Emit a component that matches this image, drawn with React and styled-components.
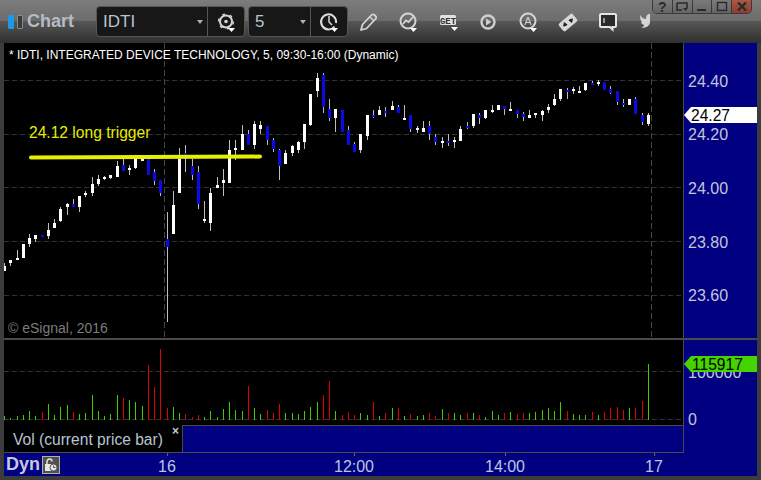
import React from 'react'
import styled, { createGlobalStyle } from 'styled-components'

const GlobalStyle = createGlobalStyle`
  html, body {
    margin: 0;
    background: #3c3c3c;
  }
`

// wick top, wick bottom, body top, body bottom, 1 = blue (down) bar
const candles = [
  [263,271,266,271,0],[260,266,260,263,0],[250,260,258,260,0],[244,258,244,258,0],[234,247,238,244,0],
  [235,242,235,239,0],[235,237,235,237,1],[223,239,230,236,0],[219,228,223,228,0],[207,222,209,221,0],
  [203,215,204,207,0],[199,207,204,207,1],[196,212,196,207,0],[191,197,193,195,0],[177,196,184,193,0],
  [175,186,179,184,0],[176,180,177,179,0],[175,179,175,178,0],[161,177,166,177,0],[159,171,165,171,1],
  [165,175,168,170,0],[155,169,155,168,0],[156,161,158,161,0],[155,175,159,175,1],[169,185,172,181,1],
  [180,196,180,193,1],[212,322,239,247,1],[191,234,205,234,0],[148,193,159,193,0],[145,172,153,156,1],
  [159,180,166,175,1],[166,209,172,204,1],[201,223,219,221,0],[188,231,193,223,0],[177,188,185,188,0],
  [169,196,180,183,0],[140,183,150,183,0],[140,160,148,150,0],[125,150,134,150,0],[130,145,134,145,1],
  [121,149,124,145,0],[121,134,125,129,0],[126,145,126,140,1],[138,152,140,149,1],[149,180,150,166,1],
  [150,164,153,164,0],[145,156,146,153,0],[141,153,142,150,0],[124,149,124,142,0],[94,126,94,125,0],
  [73,97,78,91,0],[73,113,75,107,1],[99,121,109,118,1],[109,132,109,118,0],[110,132,110,132,1],
  [126,145,130,145,1],[142,152,144,152,1],[134,153,134,150,0],[115,140,115,136,0],[110,118,115,117,1],
  [106,115,110,115,0],[107,117,111,113,1],[101,110,106,110,0],[105,113,107,113,1],[105,120,118,120,0],
  [115,132,115,129,1],[126,133,128,130,0],[121,132,128,132,0],[121,140,126,134,1],[134,145,137,142,1],
  [137,148,141,143,0],[134,146,141,143,1],[137,148,140,142,0],[126,141,129,141,0],[122,129,126,128,1],
  [114,128,114,126,0],[113,124,115,118,1],[110,119,110,118,0],[105,113,110,112,0],[105,110,105,110,0],
  [106,115,106,109,1],[102,111,109,111,0],[110,118,110,114,1],[112,121,114,117,1],[110,118,115,118,0],
  [113,118,113,115,0],[110,121,111,115,0],[104,113,107,110,0],[94,106,99,105,0],[89,101,89,99,0],
  [88,99,90,92,1],[87,94,89,91,0],[86,93,91,93,0],[83,91,83,90,0],[81,85,83,85,1],
  [80,86,82,84,0],[82,90,82,90,1],[86,94,89,93,1],[91,105,91,102,1],[99,107,103,105,1],
  [99,105,99,105,0],[97,114,99,114,1],[113,125,115,122,1],[113,126,115,124,0],
]

// height of each volume bar in px above the baseline, 1 = red
const volumes = [
  [4,0],[2,0],[4,0],[5,0],[9,0],[4,0],[8,1],[16,0],[5,0],[13,0],[15,0],[8,1],[6,0],[7,0],[25,0],[9,0],[4,0],[6,0],[25,0],[22,1],
  [20,0],[18,0],[14,0],[55,1],[33,1],[71,1],[12,1],[13,0],[7,0],[6,1],[3,1],[5,1],[3,0],[9,0],[3,0],[11,0],[18,0],[10,0],[9,0],[34,1],
  [12,0],[6,0],[10,1],[7,1],[16,1],[7,0],[7,0],[6,0],[9,0],[13,0],[18,0],[25,1],[39,1],[9,0],[5,1],[8,1],[5,1],[7,0],[5,0],[18,1],
  [4,0],[7,1],[12,0],[12,1],[4,0],[6,1],[4,0],[5,0],[7,1],[4,1],[11,0],[7,1],[7,0],[5,0],[7,1],[7,0],[5,1],[3,0],[9,0],[5,0],
  [7,1],[8,0],[6,1],[7,1],[7,0],[8,0],[10,0],[12,0],[9,0],[18,0],[9,1],[6,0],[5,0],[5,0],[8,1],[5,0],[8,1],[12,1],[13,1],[10,1],
  [12,0],[12,1],[19,1],[56,0],
]

const barX = (i) => Math.round(4 + 6.25 * i)

const Window = styled.div`
  width: 761px;
  height: 480px;
  display: flex;
  flex-direction: column;
  background: #3c3c3c;
  font-family: "Liberation Sans", Arial, sans-serif;
  position: relative;
  overflow: hidden;
`

const TitleBar = styled.div`
  height: 43px;
  flex: none;
  display: flex;
  align-items: center;
  padding-left: 8px;
  box-sizing: border-box;
  background: linear-gradient(#7c7c7c 0, #6c6c6c 48%, #565656 50%, #2f2f2f 100%);
`

const Brand = styled.div`
  width: 88px;
  flex: none;
  display: flex;
  align-items: center;
  gap: 3px;
`

const BrandBar = styled.span`
  width: 6px;
  height: 14px;
  border-radius: 1px;
  box-sizing: border-box;
  background: ${(p) => (p.$on ? '#1c9ae8' : '#3a3a3a')};
  border: 1px solid ${(p) => (p.$on ? '#1c9ae8' : '#8a8a8a')};
`

const BrandName = styled.span`
  margin-left: 1px;
  font-size: 18px;
  font-weight: bold;
  color: #b4bcc4;
`

const Combo = styled.div`
  width: ${(p) => p.$width}px;
  height: 31px;
  flex: none;
  display: flex;
  margin-right: ${(p) => p.$gap || 0}px;
  box-sizing: border-box;
  background: #171717;
  border: 1px solid #555;
  border-radius: 4px;
`

const ComboField = styled.div`
  flex: 1;
  display: flex;
  align-items: center;
  justify-content: space-between;
  padding: 1px 4px 0 6px;
  font-size: 17px;
  color: #b6c4d2;
`

const Caret = styled.span`
  width: 0;
  height: 0;
  border-left: 3.5px solid transparent;
  border-right: 3.5px solid transparent;
  border-top: 4px solid #b0b0b0;
`

const ComboIcon = styled.div`
  width: 37px;
  flex: none;
  display: flex;
  align-items: center;
  justify-content: center;
  border-left: 1px solid #555;
  box-sizing: border-box;
`

const ToolButton = styled.div`
  width: 40px;
  height: 24px;
  flex: none;
  display: flex;
  align-items: center;
  justify-content: center;
`

const WindowButtons = styled.div`
  position: absolute;
  top: 0;
  right: 9px;
  display: flex;
  width: 100px;
  height: 14px;
  box-sizing: border-box;
  border: 1px solid #3a3a3a;
  border-top: none;
  border-radius: 0 0 5px 5px;
  overflow: hidden;
`

const WinButton = styled.div`
  flex: 1;
  display: flex;
  align-items: center;
  justify-content: center;
  box-sizing: border-box;
  font-size: 14px;
  font-weight: bold;
  color: #2a2a2a;
  background: ${(p) => (p.$close ? 'linear-gradient(#a85a46, #8e3c2c)' : 'linear-gradient(#7a7a7a, #666)')};
  border-left: ${(p) => (p.$first ? 'none' : '1px solid #3a3a3a')};
`

const Main = styled.div`
  flex: 1;
  display: flex;
  flex-direction: column;
  padding: 0 4px 4px;
  min-height: 0;
`

const PriceRow = styled.div`
  height: 297px;
  flex: none;
  display: flex;
  box-sizing: border-box;
  border-bottom: 2px solid #4a4a4a;
`

const Plot = styled.div`
  flex: 1;
  position: relative;
  background: #000;
  border-right: 1px solid #4a4a4a;
`

const ChartSvg = styled.svg`
  display: block;
`

const StudyTitle = styled.div`
  position: absolute;
  left: 5px;
  top: 5px;
  font-size: 12px;
  color: #fff;
  white-space: nowrap;
`

const Annotation = styled.div`
  position: absolute;
  left: 25px;
  top: 81px;
  font-size: 15.6px;
  color: #e6ee00;
  white-space: nowrap;
`

const Copyright = styled.div`
  position: absolute;
  left: 4px;
  bottom: 2px;
  font-size: 14px;
  color: #7c7c7c;
`

const ValueAxis = styled.div`
  width: 73px;
  flex: none;
  position: relative;
  background: #000080;
`

const Tick = styled.span`
  position: absolute;
  left: 4px;
  top: ${(p) => p.$y}px;
  transform: translateY(-50%);
  font-size: 16px;
  line-height: 18px;
  color: #c4c4dc;
`

const Flag = styled.div`
  position: absolute;
  left: 0;
  top: ${(p) => p.$y}px;
  width: 73px;
  height: 16px;
  box-sizing: border-box;
  padding-left: ${(p) => p.$pad}px;
  font-size: 15.6px;
  line-height: 17px;
  color: #000;
  background: ${(p) => p.$bg};
  clip-path: polygon(0 50%, 7px 0, 100% 0, 100% 100%, 7px 100%);
`

const LowerRow = styled.div`
  height: 113px;
  flex: none;
  display: flex;
  box-sizing: border-box;
`

const LowerLeft = styled.div`
  flex: 1;
  display: flex;
  flex-direction: column;
  background: #000;
  border-right: 1px solid #4a4a4a;
  border-bottom: 1px solid #4a4a4a;
`

const LegendRow = styled.div`
  flex: 1;
  display: flex;
`

const Legend = styled.div`
  width: 178px;
  flex: none;
  position: relative;
  display: flex;
  align-items: center;
  padding: 2px 0 0 9px;
  box-sizing: border-box;
  font-size: 15.6px;
  color: #b8c4d4;
`

const LegendClose = styled.span`
  position: absolute;
  top: -1px;
  right: 3px;
  font-size: 12px;
  font-weight: bold;
  color: #c8c8c8;
`

const LegendFill = styled.div`
  flex: 1;
  background: #000080;
  border-left: 1px solid #4a4a4a;
  border-top: 1px solid #4a4a4a;
`

const TimeAxis = styled.div`
  flex: 1;
  position: relative;
  display: flex;
  align-items: center;
  background: #000080;
`

const Dyn = styled.span`
  margin-left: 2px;
  font-size: 18px;
  font-weight: bold;
  color: #c8c8dc;
`

const LockBox = styled.div`
  width: 18px;
  height: 18px;
  margin-left: 2px;
  display: flex;
  align-items: center;
  justify-content: center;
  box-sizing: border-box;
  background: #505050;
  border: 1px solid #b0b0b0;
`

const TimeLabel = styled.span`
  position: absolute;
  left: ${(p) => p.$x - 4}px;
  top: 5px;
  transform: translateX(-50%);
  font-size: 16px;
  line-height: 18px;
  color: #b8c8e0;

  &::before {
    content: '';
    position: absolute;
    left: 50%;
    top: -5px;
    width: 1px;
    height: 3px;
    background: #6a6a6a;
  }
`

const Chevron = ({ x = 15, y = 17 }) => <path d={`M${x} ${y}h7l-3.5 4z`} fill="#fff" />

const GearIcon = () => (
  <svg width="24" height="24" viewBox="0 0 24 24">
    <circle cx="12" cy="11.5" r="6" fill="none" stroke="#d4d4d4" strokeWidth="2" />
    <circle cx="12" cy="11.5" r="7.4" fill="none" stroke="#d4d4d4" strokeWidth="1.4" strokeDasharray="3 4.7" />
    <circle cx="12" cy="11.5" r="1.8" fill="#d4d4d4" />
    <Chevron x={14} y={18} />
  </svg>
)

const ClockIcon = () => (
  <svg width="24" height="24" viewBox="0 0 24 24">
    <path d="M17.5 16.5A7.5 7.5 0 1 1 19 13" fill="none" stroke="#dcdcdc" strokeWidth="2" />
    <path d="M12 6v6l3 3" fill="none" stroke="#dcdcdc" strokeWidth="1.5" />
    <Chevron x={14} y={18} />
  </svg>
)

const PencilIcon = () => (
  <svg width="24" height="24" viewBox="0 0 24 24">
    <path d="M5 20l1.5-5.5L15.5 5a2 2 0 0 1 3 0l1 1a2 2 0 0 1 0 3l-9 9.5z" fill="none" stroke="#d4d4d4" strokeWidth="1.8" strokeLinejoin="round" />
    <path d="M14 7l4 4" stroke="#d4d4d4" strokeWidth="1.2" />
  </svg>
)

const TrendIcon = () => (
  <svg width="24" height="24" viewBox="0 0 24 24">
    <circle cx="12" cy="11" r="7.5" fill="none" stroke="#d4d4d4" strokeWidth="2" />
    <path d="M7 14l3-3.5 2.5 1.5L17 7" fill="none" stroke="#d4d4d4" strokeWidth="1.8" />
    <Chevron x={14} y={18} />
  </svg>
)

const GetIcon = () => (
  <svg width="24" height="24" viewBox="0 0 24 24">
    <rect x="4" y="5" width="16" height="10" rx="1.5" fill="#e0e0e0" />
    <text x="12" y="13.5" textAnchor="middle" fontFamily="Liberation Mono, monospace" fontSize="9" fontWeight="bold" fill="#333">GET</text>
    <Chevron x={15} y={17} />
  </svg>
)

const PlayIcon = () => (
  <svg width="24" height="24" viewBox="0 0 24 24">
    <circle cx="12" cy="12" r="6.5" fill="none" stroke="#cfcfcf" strokeWidth="2.4" />
    <path d="M10 8.5l5.5 3.5-5.5 3.5z" fill="#cfcfcf" />
  </svg>
)

const AutoIcon = () => (
  <svg width="24" height="24" viewBox="0 0 24 24">
    <circle cx="12" cy="11" r="7.5" fill="none" stroke="#d4d4d4" strokeWidth="2" />
    <text x="12" y="15" textAnchor="middle" fontFamily="Liberation Sans, sans-serif" fontSize="11" fill="#d4d4d4">A</text>
    <Chevron x={14} y={18} />
  </svg>
)

const SwapIcon = () => (
  <svg width="24" height="24" viewBox="0 0 24 24">
    <rect x="3" y="7.5" width="18" height="10" rx="2" fill="#d8d8d8" transform="rotate(-40 12 12.5)" />
    <path d="M8 12l3.5 2.5L10 16l-3 .5zM16 13l-3.5-2.5L14 9l3-.5z" fill="#222" />
  </svg>
)

const CommentIcon = () => (
  <svg width="24" height="24" viewBox="0 0 24 24">
    <path d="M5 4h14a1 1 0 0 1 1 1v11a1 1 0 0 1-1 1h-2.5v2.5L14 17H5a1 1 0 0 1-1-1V5a1 1 0 0 1 1-1z" fill="#2a2a2a" stroke="#e4e4e4" strokeWidth="2" />
    <path d="M8 8v5" stroke="#e4e4e4" strokeWidth="1.2" />
  </svg>
)

const BirdIcon = () => (
  <svg width="24" height="24" viewBox="0 0 24 24">
    <path d="M4 5c2 3 4 4 6 4 0-3 1-5 4-5v8c0 3-3 6-9 6 2-1 3-2 3-3-2-1-3-2-3-3h1c-1-1-2-3-2-7z" fill="#d4d4d4" />
  </svg>
)

const LockIcon = () => (
  <svg width="14" height="14" viewBox="0 0 14 14">
    <path d="M3 6V3.5a2.5 2.5 0 0 1 5 0" fill="none" stroke="#e8e8e8" strokeWidth="1.4" />
    <rect x="1" y="6" width="8" height="7" fill="#e8e8e8" />
    <circle cx="9.5" cy="9.5" r="3.5" fill="#e8e8e8" stroke="#505050" />
    <path d="M9.5 7.5v2h2" fill="none" stroke="#505050" />
  </svg>
)

const PriceChart = () => (
  <ChartSvg width="679" height="295" viewBox="4 43 679 295" shapeRendering="crispEdges">
    {[80, 134, 187, 241, 295].map((y) => (
      <line key={y} x1="4" x2="683" y1={y + 0.5} y2={y + 0.5} stroke="#333" strokeDasharray="5 3" />
    ))}
    {[164, 651].map((x) => (
      <line key={x} x1={x + 0.5} x2={x + 0.5} y1="43" y2="338" stroke="#444" strokeDasharray="6 3" />
    ))}
    {candles.map(([wickTop, wickBot, bodyTop, bodyBot, down], i) => (
      <g key={i}>
        <rect x={barX(i)} y={wickTop} width="1" height={wickBot - wickTop} fill="#bdbdbd" />
        <rect x={barX(i) - 1} y={bodyTop} width="3" height={bodyBot - bodyTop} fill={down ? '#0a0ae6' : '#fff'} />
      </g>
    ))}
    <line x1="31" y1="157.6" x2="260" y2="156.6" stroke="#e6f000" strokeWidth="4" strokeLinecap="round" shapeRendering="auto" />
  </ChartSvg>
)

const VolumeChart = () => (
  <ChartSvg width="679" height="85" viewBox="4 340 679 85" shapeRendering="crispEdges">
    {[371, 419].map((y) => (
      <line key={y} x1="4" x2="683" y1={y + 0.5} y2={y + 0.5} stroke="#333" strokeDasharray="5 3" />
    ))}
    {volumes.map(([h, red], i) => (
      <rect key={i} x={barX(i)} y={420 - h} width="1" height={h} fill={red ? '#e00000' : '#3ad000'} />
    ))}
  </ChartSvg>
)

export default function App() {
  return (
    <Window>
      <GlobalStyle />
      <TitleBar>
        <Brand>
          <BrandBar $on />
          <BrandBar />
          <BrandName>Chart</BrandName>
        </Brand>
        <Combo $width={149} $gap={3}>
          <ComboField>IDTI<Caret /></ComboField>
          <ComboIcon><GearIcon /></ComboIcon>
        </Combo>
        <Combo $width={100}>
          <ComboField>5<Caret /></ComboField>
          <ComboIcon><ClockIcon /></ComboIcon>
        </Combo>
        <ToolButton><PencilIcon /></ToolButton>
        <ToolButton><TrendIcon /></ToolButton>
        <ToolButton><GetIcon /></ToolButton>
        <ToolButton><PlayIcon /></ToolButton>
        <ToolButton><AutoIcon /></ToolButton>
        <ToolButton><SwapIcon /></ToolButton>
        <ToolButton><CommentIcon /></ToolButton>
        <ToolButton><BirdIcon /></ToolButton>
        <WindowButtons>
          <WinButton $first>?</WinButton>
          <WinButton>
            <svg width="14" height="12" viewBox="0 0 14 12">
              <path d="M2 2h10v5M2 2v7h5" fill="none" stroke="#2a2a2a" strokeWidth="1.6" />
              <path d="M8 7h5l-2.5 3z" fill="#2a2a2a" />
            </svg>
          </WinButton>
          <WinButton>
            <svg width="12" height="12" viewBox="0 0 12 12"><rect x="1" y="8" width="9" height="2" fill="#2a2a2a" /></svg>
          </WinButton>
          <WinButton>
            <svg width="12" height="12" viewBox="0 0 12 12"><rect x="1.5" y="1.5" width="9" height="8" fill="none" stroke="#2a2a2a" strokeWidth="1.4" /></svg>
          </WinButton>
          <WinButton $close>
            <svg width="12" height="12" viewBox="0 0 12 12"><path d="M2 1.5l8 8M10 1.5l-8 8" stroke="#2a2a2a" strokeWidth="2.4" /></svg>
          </WinButton>
        </WindowButtons>
      </TitleBar>
      <Main>
        <PriceRow>
          <Plot>
            <PriceChart />
            <StudyTitle>* IDTI, INTEGRATED DEVICE TECHNOLOGY, 5, 09:30-16:00 (Dynamic)</StudyTitle>
            <Annotation>24.12 long trigger</Annotation>
            <Copyright>© eSignal, 2016</Copyright>
          </Plot>
          <ValueAxis>
            <Tick $y={39}>24.40</Tick>
            <Tick $y={92}>24.20</Tick>
            <Tick $y={146}>24.00</Tick>
            <Tick $y={200}>23.80</Tick>
            <Tick $y={253}>23.60</Tick>
            <Flag $y={64} $pad={7} $bg="#fff">24.27</Flag>
          </ValueAxis>
        </PriceRow>
        <LowerRow>
          <LowerLeft>
            <VolumeChart />
            <LegendRow>
              <Legend>
                Vol (current price bar)
                <LegendClose>×</LegendClose>
              </Legend>
              <LegendFill />
            </LegendRow>
          </LowerLeft>
          <ValueAxis>
            <Tick $y={33}>100000</Tick>
            <Tick $y={80}>0</Tick>
            <Flag $y={16} $pad={8} $bg="#44d400">115917</Flag>
          </ValueAxis>
        </LowerRow>
        <TimeAxis>
          <Dyn>Dyn</Dyn>
          <LockBox><LockIcon /></LockBox>
          <TimeLabel $x={167}>16</TimeLabel>
          <TimeLabel $x={354}>12:00</TimeLabel>
          <TimeLabel $x={505}>14:00</TimeLabel>
          <TimeLabel $x={654}>17</TimeLabel>
        </TimeAxis>
      </Main>
    </Window>
  )
}
